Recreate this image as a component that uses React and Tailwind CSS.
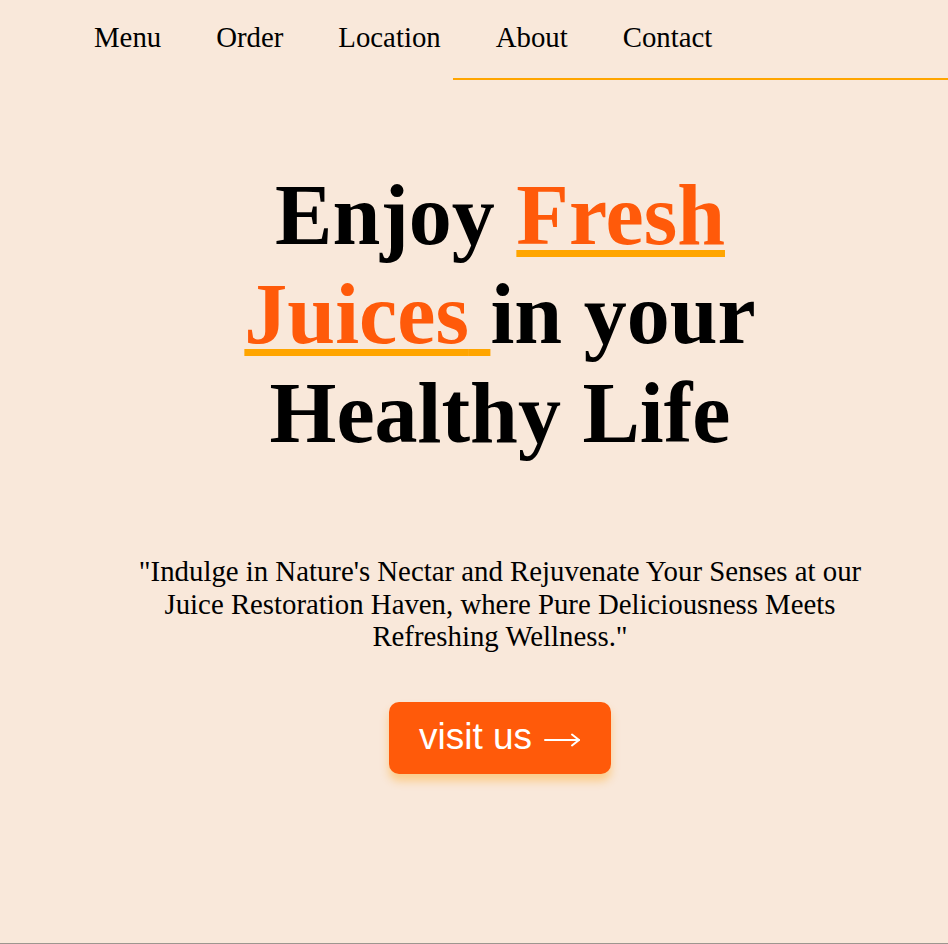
export default function App() {
  const links = ["Menu", "Order", "Location", "About", "Contact"];

  return (
    <div className="h-[944px] overflow-hidden border-b border-[#9d968f] bg-[#f9e8da] font-['Liberation_Serif',serif] text-black">
      <nav className="pt-[21px]">
        <ul className="flex gap-[55px] pl-[94px] text-[28.8px] leading-[32px]">
          {links.map((link) => (
            <li key={link}>
              <a href="#">{link}</a>
            </li>
          ))}
        </ul>
        <div className="ml-[453px] mt-[25px] h-[2px] bg-[#ffa500]" />
      </nav>

      <main className="pl-[52px] pt-[86px]">
        <h1 className="mx-auto max-w-[580px] text-center text-[86px] font-bold leading-[99px]">
          Enjoy{" "}
          <span className="text-[#ff5a0a] underline decoration-[#ffa500] decoration-[7px] underline-offset-[6px]">
            Fresh
          </span>{" "}
          <span className="text-[#ff5a0a] underline decoration-[#ffa500] decoration-[7px] underline-offset-[6px]">
            Juices{" "}
          </span>
          in your Healthy Life
        </h1>

        <p className="mx-auto mt-[92px] max-w-[750px] text-center text-[28.8px] leading-[32.5px]">
          "Indulge in Nature's Nectar and Rejuvenate Your Senses at our Juice
          Restoration Haven, where Pure Deliciousness Meets Refreshing Wellness."
        </p>

        <div className="mt-[49px] flex justify-center">
          <button className="flex h-[72px] w-[222px] items-center justify-center gap-[12px] rounded-[10px] bg-[#ff5a0a] font-['Liberation_Sans',sans-serif] text-[37px] text-white shadow-[0_7px_8px_rgba(255,170,40,0.45)]">
            <span className="mb-[2px]">visit us</span>
            <svg width="37" height="14" viewBox="0 0 37 14" fill="none" stroke="white" strokeWidth="2" strokeLinecap="round" strokeLinejoin="round" className="mt-[4px]">
              <path d="M1 7h34" />
              <path d="M28 1.5 35 7l-7 5.5" />
            </svg>
          </button>
        </div>
      </main>
    </div>
  );
}
